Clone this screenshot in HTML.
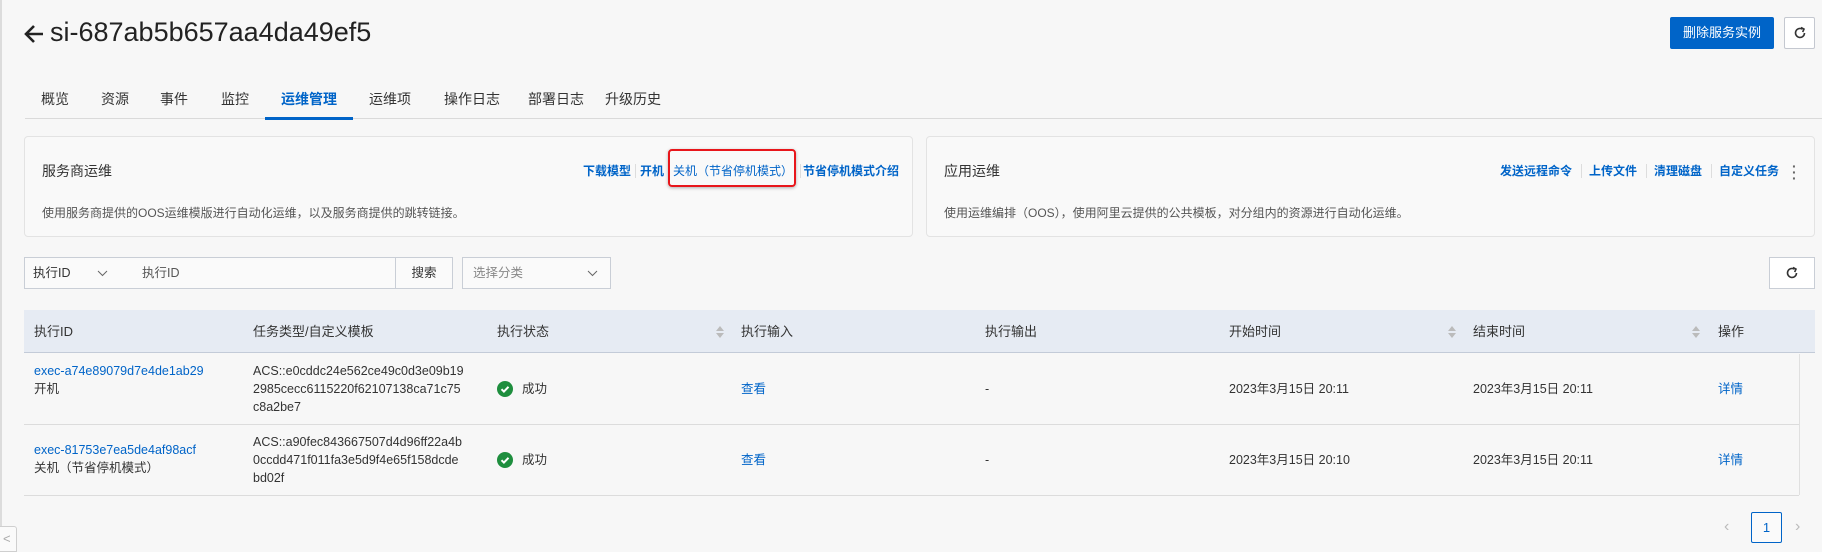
<!DOCTYPE html>
<html><head><meta charset="utf-8"><style>
*{box-sizing:border-box;margin:0;padding:0}
body{width:1822px;height:552px;overflow:hidden;background:#f7f7f7;font-family:"Liberation Sans","Noto Sans CJK SC",sans-serif;color:#333;position:relative;font-size:12.5px}
.a{position:absolute;white-space:nowrap}
.blue{color:#0064c8}
.card{position:absolute;top:136px;height:101px;background:#f9f9f9;border:1px solid #e3e3e3;border-radius:4px}
.ct{position:absolute;left:17px;top:24px;font-size:14px;color:#333}
.cd{position:absolute;left:17px;top:67px;font-size:12px;color:#555}
.lk{position:absolute;top:25px;font-size:12px;color:#0064c8;font-weight:bold}
.sep{position:absolute;top:27px;width:1px;height:14px;background:#ddd}
.box{position:absolute;border:1px solid #c9ced6;background:#fafafa;line-height:30px}
.th{position:absolute;top:0;line-height:43px;font-size:13px;color:#333}
.sort{position:absolute;top:15px;width:8px;height:14px}
.td{position:absolute;font-size:12.5px;line-height:18px}
</style></head><body>
<div class="a" style="left:0;top:0;width:2px;height:552px;background:#dcdcdc"></div>
<div class="a" style="left:0;top:526px;width:17px;height:26px;border:1px solid #cfcfcf;border-left:none;border-radius:0 3px 0 0;background:#fafafa"><span style="position:absolute;left:3px;top:4px;color:#aaa;font-size:13px">&lt;</span></div>

<svg class="a" style="left:23px;top:23px" width="22" height="22" viewBox="0 0 22 22"><path d="M20 11H3M11 3L3 11l8 8" stroke="#222" stroke-width="2.6" fill="none"/></svg>
<div class="a" style="left:50px;top:17px;font-size:27px;color:#222">si-687ab5b657aa4da49ef5</div>
<div class="a" style="left:1670px;top:17px;width:104px;height:32px;background:#0064c8;border-radius:2px;color:#fff;font-size:13px;line-height:32px;text-align:center">删除服务实例</div>
<div class="a" style="left:1784px;top:17px;width:31px;height:32px;border:1px solid #c4c8d0;background:#fff;border-radius:2px"><svg style="position:absolute;left:8px;top:8px" width="14" height="14" viewBox="0 0 14 14"><path d="M11.5 7A4.5 4.5 0 1 1 9.5 3.2" stroke="#333" stroke-width="1.6" fill="none"/><path d="M8 1.5l3 1.6-1.3 3" stroke="#333" stroke-width="1.6" fill="none"/></svg></div>

<div class="a" style="left:25px;top:118px;width:1797px;height:1px;background:#dadada"></div>
<div style="position:absolute;top:89px;font-size:14px;color:#333">
<span class="a" style="left:41px">概览</span><span class="a" style="left:101px">资源</span><span class="a" style="left:160px">事件</span><span class="a" style="left:221px">监控</span><span class="a" style="left:281px;color:#0064c8;font-weight:bold">运维管理</span><span class="a" style="left:369px">运维项</span><span class="a" style="left:444px">操作日志</span><span class="a" style="left:528px">部署日志</span><span class="a" style="left:605px">升级历史</span></div>
<div class="a" style="left:265px;top:117px;width:88px;height:3px;background:#0064c8"></div>

<div class="card" style="left:24px;width:889px">
<div class="ct">服务商运维</div>
<div class="cd">使用服务商提供的OOS运维模版进行自动化运维，以及服务商提供的跳转链接。</div>
<span class="lk" style="left:558px">下载模型</span><span class="sep" style="left:610px"></span>
<span class="lk" style="left:615px">开机</span><span class="sep" style="left:644px"></span>
<span class="lk" style="left:648px;font-weight:normal">关机（节省停机模式）</span><span class="sep" style="left:775px"></span>
<span class="lk" style="left:778px">节省停机模式介绍</span>
<div style="position:absolute;left:643px;top:12px;width:128px;height:38px;border:2.5px solid #e8161b;border-radius:4px;box-shadow:0 1px 3px rgba(0,0,0,.3)"></div>
</div>
<div class="card" style="left:926px;width:889px">
<div class="ct">应用运维</div>
<div class="cd">使用运维编排（OOS），使用阿里云提供的公共模板，对分组内的资源进行自动化运维。</div>
<span class="lk" style="left:573px">发送远程命令</span><span class="sep" style="left:654px"></span>
<span class="lk" style="left:662px">上传文件</span><span class="sep" style="left:719px"></span>
<span class="lk" style="left:727px">清理磁盘</span><span class="sep" style="left:784px"></span>
<span class="lk" style="left:792px">自定义任务</span>
<span style="position:absolute;left:865px;top:26px;color:#666;font-size:14px;line-height:6px;font-weight:bold">·<br>·<br>·</span>
</div>

<div class="box" style="left:24px;top:257px;width:111px;height:32px"><span class="a" style="left:8px;top:0">执行ID</span><svg style="position:absolute;left:72px;top:12px" width="11" height="7"><path d="M1 1l4.5 4.5L10 1" stroke="#666" fill="none"/></svg></div>
<div class="box" style="left:134px;top:257px;width:262px;height:32px;border-left:none"><span class="a" style="left:8px;top:0;color:#555">执行ID</span></div>
<div class="box" style="left:395px;top:257px;width:58px;height:32px;text-align:center">搜索</div>
<div class="box" style="left:462px;top:257px;width:149px;height:32px"><span class="a" style="left:10px;top:0;color:#888">选择分类</span><svg style="position:absolute;left:124px;top:12px" width="11" height="7"><path d="M1 1l4.5 4.5L10 1" stroke="#666" fill="none"/></svg></div>
<div class="box" style="left:1769px;top:257px;width:46px;height:32px;background:#fff"><svg style="position:absolute;left:15px;top:8px" width="14" height="14" viewBox="0 0 14 14"><path d="M11.5 7A4.5 4.5 0 1 1 9.5 3.2" stroke="#333" stroke-width="1.6" fill="none"/><path d="M8 1.5l3 1.6-1.3 3" stroke="#333" stroke-width="1.6" fill="none"/></svg></div>

<div class="a" style="left:24px;top:310px;width:1791px;height:43px;background:#e6ebf3;border-bottom:1px solid #c3cbd8">
<span class="th" style="left:10px">执行ID</span><span class="th" style="left:229px">任务类型/自定义模板</span><span class="th" style="left:473px">执行状态</span><span class="th" style="left:717px">执行输入</span><span class="th" style="left:961px">执行输出</span><span class="th" style="left:1205px">开始时间</span><span class="th" style="left:1449px">结束时间</span><span class="th" style="left:1694px">操作</span>
<svg class="sort" style="left:692px"><path d="M0 6l4-5 4 5zM0 8l4 5 4-5z" fill="#bbb"/></svg>
<svg class="sort" style="left:1424px"><path d="M0 6l4-5 4 5zM0 8l4 5 4-5z" fill="#bbb"/></svg>
<svg class="sort" style="left:1668px"><path d="M0 6l4-5 4 5zM0 8l4 5 4-5z" fill="#bbb"/></svg>
</div>
<div class="a" style="left:1799px;top:354px;width:1px;height:141px;background:#e0e0e0"></div>
<div class="a" style="left:24px;top:424px;width:1775px;height:1px;background:#dcdcdc"></div>
<div class="a" style="left:24px;top:495px;width:1775px;height:1px;background:#dcdcdc"></div>

<div class="td blue" style="left:34px;top:362px">exec-a74e89079d7e4de1ab29</div>
<div class="td" style="left:34px;top:380px">开机</div>
<div class="td" style="left:253px;top:362px">ACS::e0cddc24e562ce49c0d3e09b19<br>2985cecc6115220f62107138ca71c75<br>c8a2be7</div>
<svg class="a" style="left:497px;top:381px" width="16" height="16"><circle cx="8" cy="8" r="8" fill="#1e8e3e"/><path d="M4.5 8.2l2.4 2.4 4.6-4.8" stroke="#fff" stroke-width="2" fill="none"/></svg>
<div class="td" style="left:522px;top:380px">成功</div>
<div class="td blue" style="left:741px;top:380px">查看</div>
<div class="td" style="left:985px;top:380px">-</div>
<div class="td" style="left:1229px;top:380px">2023年3月15日 20:11</div>
<div class="td" style="left:1473px;top:380px">2023年3月15日 20:11</div>
<div class="td blue" style="left:1718px;top:380px">详情</div>

<div class="td blue" style="left:34px;top:441px">exec-81753e7ea5de4af98acf</div>
<div class="td" style="left:34px;top:459px">关机（节省停机模式）</div>
<div class="td" style="left:253px;top:433px">ACS::a90fec843667507d4d96ff22a4b<br>0ccdd471f011fa3e5d9f4e65f158dcde<br>bd02f</div>
<svg class="a" style="left:497px;top:452px" width="16" height="16"><circle cx="8" cy="8" r="8" fill="#1e8e3e"/><path d="M4.5 8.2l2.4 2.4 4.6-4.8" stroke="#fff" stroke-width="2" fill="none"/></svg>
<div class="td" style="left:522px;top:451px">成功</div>
<div class="td blue" style="left:741px;top:451px">查看</div>
<div class="td" style="left:985px;top:451px">-</div>
<div class="td" style="left:1229px;top:451px">2023年3月15日 20:10</div>
<div class="td" style="left:1473px;top:451px">2023年3月15日 20:11</div>
<div class="td blue" style="left:1718px;top:451px">详情</div>

<span class="a" style="left:1724px;top:518px;color:#bbb;font-size:16px">‹</span>
<div class="a" style="left:1751px;top:512px;width:31px;height:31px;border:1px solid #0064c8;border-radius:2px;color:#0064c8;text-align:center;line-height:29px;font-size:13px;background:#fafafa">1</div>
<span class="a" style="left:1795px;top:518px;color:#bbb;font-size:16px">›</span>
</body></html>
